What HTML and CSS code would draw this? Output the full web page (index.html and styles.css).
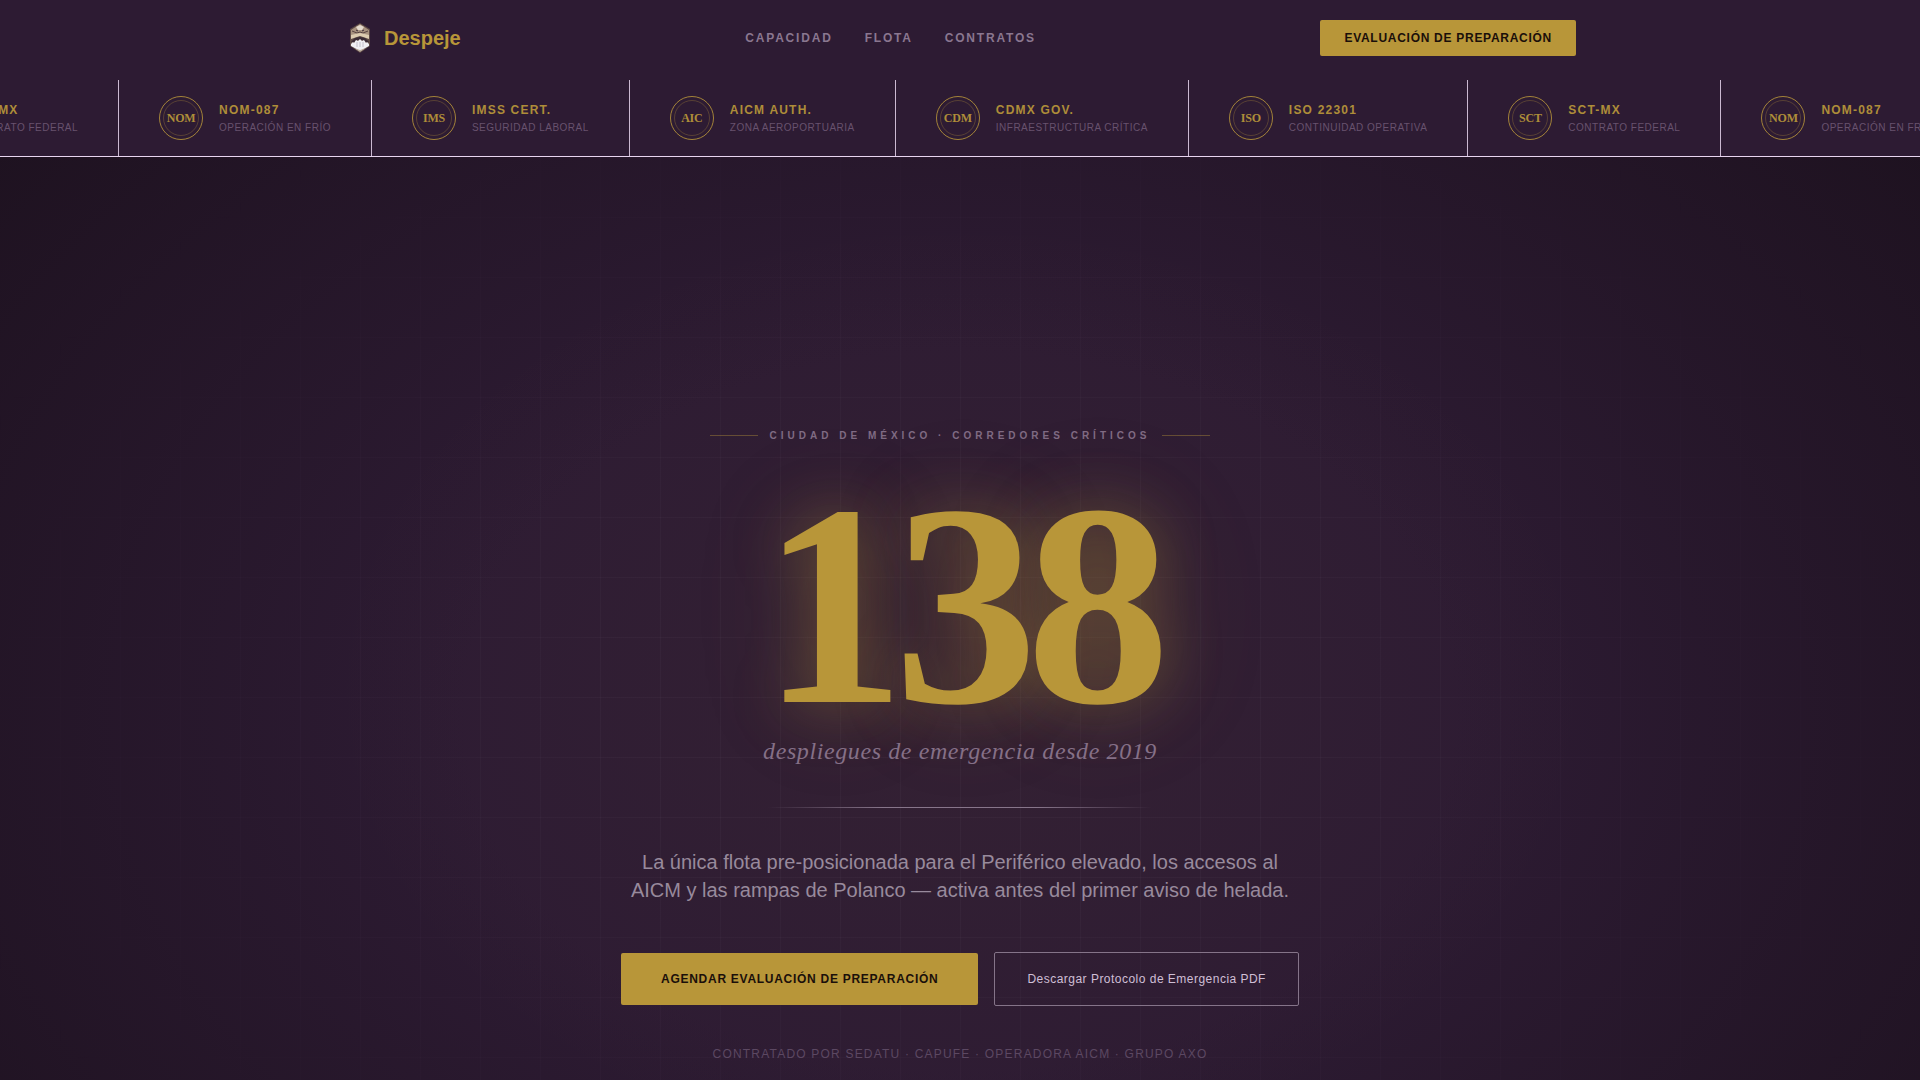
FILE: index.html
```html
<!DOCTYPE html>
<html lang="es">
<head>
    <meta charset="UTF-8">
    <meta name="viewport" content="width=device-width, initial-scale=1.0">
    <title>Despeje</title>
    <link rel="stylesheet" href="styles.css">
</head>
<body>

    <header class="header">
        <div class="header-inner">
            <a href="#" class="brand">
                <svg class="brand-icon" viewBox="0 0 32 32" aria-hidden="true">
                    <path d="M16 1 L26 7 V24 L16 31 L6 24 V7 Z" fill="#5b4744"/>
                    <path d="M16 2 L25 8 V14 L16 12 L7 14 V8 Z" fill="#a8927f"/>
                    <path d="M12 5 L16 3 L20 5 L18 8 H14 Z" fill="#e4d9cc"/>
                    <path d="M8 9 L13 11 L16 10 L19 11 L24 9" fill="none" stroke="#56413f" stroke-width="1"/>
                    <path d="M12 8 L14 9 M20 8 L18 9" stroke="#3a2a35" stroke-width="1"/>
                    <path d="M7 13 L16 11 L25 13 V17 L16 14 L7 17 Z" fill="#dccbb0"/>
                    <path d="M7 20 L11 16 L16 15 L21 16 L25 20 L22 20 L19 18 H13 L10 20 Z" fill="#3a2a35"/>
                    <path d="M7 22 L9 20 L10 21 L12 18 L14 19 L16 17 L18 19 L20 18 L22 21 L23 20 L25 22 V24 L16 29 L7 24 Z" fill="#f1f0f3"/>
                    <path d="M13 20 V25 M16 20 V25 M19 20 V25" stroke="#c4c0ca" stroke-width="1"/>
                    <path d="M10 26 L16 28 L22 26 L16 30 Z" fill="#bcae9f"/>
                </svg>
                <span class="brand-name">Despeje</span>
            </a>
            <nav class="nav">
                <a href="#capacidad">CAPACIDAD</a>
                <a href="#flota">FLOTA</a>
                <a href="#contratos">CONTRATOS</a>
            </nav>
            <button type="button" class="btn btn-small">EVALUACIÓN DE PREPARACIÓN</button>
        </div>
    </header>

    <section class="ticker" aria-label="Certificaciones">
        <ul class="ticker-track">
            <li class="cert">
                <span class="seal">SCT</span>
                <div class="cert-text"><strong>SCT-MX</strong><span>CONTRATO FEDERAL</span></div>
            </li>
            <li class="cert">
                <span class="seal">NOM</span>
                <div class="cert-text"><strong>NOM-087</strong><span>OPERACIÓN EN FRÍO</span></div>
            </li>
            <li class="cert">
                <span class="seal">IMS</span>
                <div class="cert-text"><strong>IMSS CERT.</strong><span>SEGURIDAD LABORAL</span></div>
            </li>
            <li class="cert">
                <span class="seal">AIC</span>
                <div class="cert-text"><strong>AICM AUTH.</strong><span>ZONA AEROPORTUARIA</span></div>
            </li>
            <li class="cert">
                <span class="seal">CDM</span>
                <div class="cert-text"><strong>CDMX GOV.</strong><span>INFRAESTRUCTURA CRÍTICA</span></div>
            </li>
            <li class="cert">
                <span class="seal">ISO</span>
                <div class="cert-text"><strong>ISO 22301</strong><span>CONTINUIDAD OPERATIVA</span></div>
            </li>
            <li class="cert">
                <span class="seal">SCT</span>
                <div class="cert-text"><strong>SCT-MX</strong><span>CONTRATO FEDERAL</span></div>
            </li>
            <li class="cert">
                <span class="seal">NOM</span>
                <div class="cert-text"><strong>NOM-087</strong><span>OPERACIÓN EN FRÍO</span></div>
            </li>
        </ul>
    </section>

    <main class="hero">
        <div class="hero-content">
            <p class="eyebrow">CIUDAD DE MÉXICO · CORREDORES CRÍTICOS</p>
            <h1 class="hero-number">138</h1>
            <p class="hero-caption">despliegues de emergencia desde 2019</p>
            <hr class="divider">
            <p class="hero-text">La única flota pre-posicionada para el Periférico elevado, los accesos al AICM y las rampas de Polanco — activa antes del primer aviso de helada.</p>
            <div class="actions">
                <button type="button" class="btn btn-large">AGENDAR EVALUACIÓN DE PREPARACIÓN</button>
                <a href="#protocolo" class="btn-outline">Descargar Protocolo de Emergencia PDF</a>
            </div>
            <p class="clients">CONTRATADO POR SEDATU · CAPUFE · OPERADORA AICM · GRUPO AXO</p>
        </div>
    </main>

</body>
</html>
```
FILE: styles.css
```css
:root {
    --gold: #b89639;
    --purple: #2d1b33;
    --ink: #1e1220;
    --lavender: #e8d5f0;
}

* {
    box-sizing: border-box;
    margin: 0;
    padding: 0;
}

body {
    font-family: 'Liberation Sans', Arial, sans-serif;
    background-color: var(--purple);
    min-height: 100vh;
    display: flex;
    flex-direction: column;
    overflow-x: hidden;
}

a {
    text-decoration: none;
}

/* Header */
.header {
    padding: 20px 0 24px;
}

.header-inner {
    max-width: 1280px;
    margin: 0 auto;
    padding: 0 24px;
    display: flex;
    justify-content: space-between;
    align-items: center;
}

.brand {
    display: flex;
    align-items: center;
    gap: 8px;
}

.brand-icon {
    width: 32px;
    height: 32px;
}

.brand-name {
    color: var(--gold);
    font-size: 20px;
    font-weight: bold;
}

.nav {
    display: flex;
    gap: 32px;
}

.nav a {
    color: #8a7790;
    font-size: 12px;
    font-weight: bold;
    letter-spacing: 0.15em;
}

.btn {
    background-color: var(--gold);
    color: #1a0f0a;
    border: none;
    border-radius: 2px;
    font-family: inherit;
    font-size: 12px;
    font-weight: bold;
    line-height: 16px;
    letter-spacing: 0.06em;
    cursor: pointer;
}

.btn-small {
    padding: 10px 24px;
}

.btn-large {
    padding: 18px 40px;
}

/* Certifications */
.ticker {
    overflow: hidden;
    border-bottom: 1px solid var(--lavender);
}

.ticker-track {
    display: flex;
    width: max-content;
    margin-left: -134px;
    list-style: none;
}

.cert {
    display: flex;
    align-items: center;
    gap: 16px;
    padding: 16px 40px;
    border-right: 1px solid #cbb9d2;
}

.seal {
    width: 44px;
    height: 44px;
    display: flex;
    align-items: center;
    justify-content: center;
    position: relative;
    border: 1px solid #a38339;
    border-radius: 50%;
    color: #ae8d39;
    font-family: 'Liberation Serif', 'Times New Roman', serif;
    font-size: 12px;
    font-weight: bold;
    letter-spacing: -0.02em;
}

.seal::after {
    content: "";
    position: absolute;
    inset: 3px;
    border: 1px solid rgba(184, 150, 57, 0.3);
    border-radius: 50%;
}

.cert-text {
    display: flex;
    flex-direction: column;
    gap: 2px;
    padding-top: 2px;
    white-space: nowrap;
}

.cert-text strong {
    color: #ae8d39;
    font-size: 12px;
    line-height: 16px;
    letter-spacing: 0.1em;
}

.cert-text span {
    color: #68526e;
    font-size: 10px;
    line-height: 16px;
    letter-spacing: 0.05em;
}

/* Hero */
.hero {
    flex: 1;
    position: relative;
    padding: 268px 24px 16px;
    background:
        radial-gradient(ellipse 640px 480px at 50% 58%, rgba(184, 150, 57, 0.05), transparent),
        radial-gradient(ellipse 1240px 900px at 50% 60%, var(--purple) 40%, var(--ink) 100%);
}

/* faint street grid, fading towards the edges */
.hero::before {
    content: "";
    position: absolute;
    inset: 0;
    background-image:
        linear-gradient(rgba(232, 213, 240, 0.03) 1px, transparent 1px),
        linear-gradient(90deg, rgba(232, 213, 240, 0.03) 1px, transparent 1px);
    background-size: 60px 60px;
    -webkit-mask-image: radial-gradient(ellipse 1100px 700px at 50% 58%, #000 30%, transparent 100%);
    mask-image: radial-gradient(ellipse 1100px 700px at 50% 58%, #000 30%, transparent 100%);
}

.hero-content {
    position: relative;
    display: flex;
    flex-direction: column;
    align-items: center;
    text-align: center;
}

.eyebrow {
    display: flex;
    align-items: center;
    gap: 12px;
    color: #806c84;
    font-size: 10px;
    font-weight: bold;
    line-height: 21px;
    letter-spacing: 0.4em;
}

.eyebrow::before,
.eyebrow::after {
    content: "";
    width: 48px;
    height: 1px;
    background-color: rgba(184, 150, 57, 0.4);
}

.hero-number {
    margin-top: 31px;
    color: var(--gold);
    font-family: 'Liberation Serif', 'Times New Roman', serif;
    font-size: 288px;
    font-weight: bold;
    line-height: 256px;
    letter-spacing: -0.04em;
    text-shadow: 0 0 60px rgba(184, 150, 57, 0.4), 0 0 120px rgba(184, 150, 57, 0.15);
}

.hero-caption {
    margin-top: 2px;
    color: #857087;
    font-family: 'Liberation Serif', 'Times New Roman', serif;
    font-size: 24px;
    font-style: italic;
    line-height: 32px;
    letter-spacing: 0.025em;
}

.divider {
    width: 384px;
    height: 1px;
    margin: 40px 0;
    border: none;
    background: linear-gradient(90deg, transparent, #87758a 30%, #87758a 70%, transparent);
}

.hero-text {
    max-width: 680px;
    color: #988a9c;
    font-size: 20px;
    line-height: 28px;
}

.actions {
    display: flex;
    align-items: center;
    gap: 16px;
    margin-top: 48px;
}

.btn-outline {
    padding: 18px 32px;
    border: 1px solid #857489;
    border-radius: 2px;
    color: #cfbfd6;
    font-size: 12px;
    line-height: 16px;
    letter-spacing: 0.04em;
}

.clients {
    margin-top: 40px;
    color: #5c4862;
    font-size: 12px;
    line-height: 16px;
    letter-spacing: 0.1em;
}
```
